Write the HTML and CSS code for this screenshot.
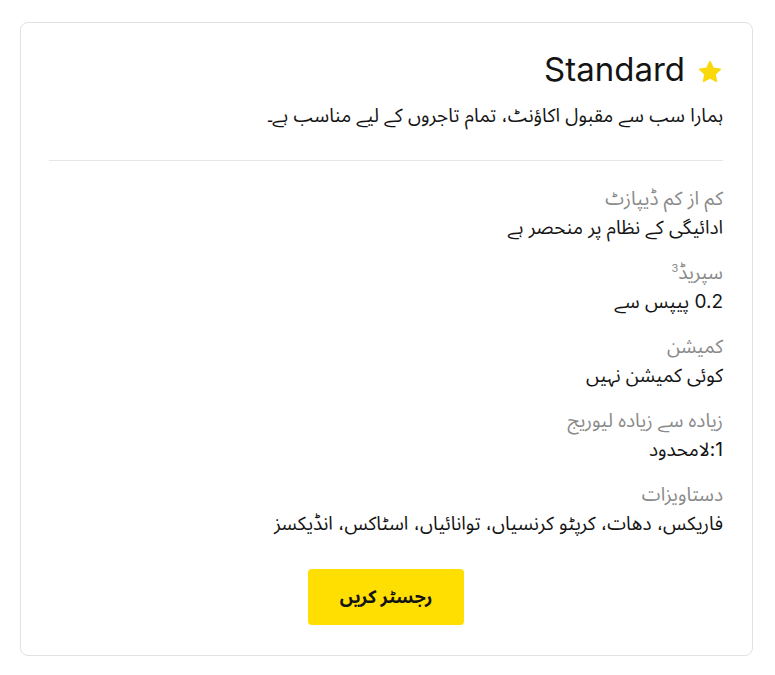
FILE: index.html
```html
<!DOCTYPE html>
<html lang="ur" dir="rtl">
<head>
  <meta charset="UTF-8" />
  <meta name="viewport" content="width=device-width, initial-scale=1" />
  <title>Standard</title>
  <link rel="stylesheet" href="styles.css">
</head>
<body>

<div class="plan-card">
  <div class="plan-head">
    <h2 class="plan-title">
      <svg class="star" width="26" height="26" viewBox="0 0 24 24"><path d="M12 2.5l2.9 6.1 6.6.8-4.9 4.6 1.3 6.6L12 17.3l-5.9 3.3 1.3-6.6-4.9-4.6 6.6-.8z" fill="#f9d90a" stroke="#f9d90a" stroke-width="1.5" stroke-linejoin="round"/></svg>
      <span dir="ltr">Standard</span>
    </h2>
    <p class="plan-desc">ہمارا سب سے مقبول اکاؤنٹ، تمام تاجروں کے لیے مناسب ہے۔</p>
  </div>

  <div class="plan-rows">
    <div class="row">
      <div class="row-label">کم از کم ڈیپازٹ</div>
      <div class="row-value">ادائیگی کے نظام پر منحصر ہے</div>
    </div>
    <div class="row">
      <div class="row-label">سپریڈ<sup>3</sup></div>
      <div class="row-value">0.2 پیپس سے</div>
    </div>
    <div class="row">
      <div class="row-label">کمیشن</div>
      <div class="row-value">کوئی کمیشن نہیں</div>
    </div>
    <div class="row">
      <div class="row-label">زیادہ سے زیادہ لیوریج</div>
      <div class="row-value">1:لامحدود</div>
    </div>
    <div class="row">
      <div class="row-label">دستاویزات</div>
      <div class="row-value">فاریکس، دھات، کرپٹو کرنسیاں، توانائیاں، اسٹاکس، انڈیکسز</div>
    </div>
  </div>

  <div class="plan-action">
    <button class="btn-register">رجسٹر کریں</button>
  </div>
</div>

</body>
</html>
```

FILE: styles.css
```css
body {
  font-family: 'Inter', 'Noto Sans Arabic', 'DejaVu Sans', sans-serif;
  background: #fff;
  margin: 0;
  padding: 22px 22px 0 20px;
  color: #141414;
}
.plan-card {
  width: 733px;
  height: 634px;
  box-sizing: border-box;
  border: 1px solid #e2e2e2;
  border-radius: 8px;
  padding: 24px 29px 0 28px;
}
.plan-head {
  border-bottom: 1px solid #e6e6e6;
  padding-bottom: 31px;
}
.plan-title {
  margin: 0;
  display: flex;
  align-items: center;
  gap: 12px;
  font-size: 33px;
  font-weight: 400;
  line-height: 44px;
  color: #141414;
}
.star {
  margin-top: 6px;
}
.plan-desc {
  margin: 12px 0 0;
  font-size: 19px;
  line-height: 26px;
}
.plan-rows {
  padding-top: 23px;
}
.row {
  margin-bottom: 16px;
}
.row-label {
  color: #8a8a8a;
  font-size: 19px;
  line-height: 29px;
}
.row-label sup {
  font-size: 11px;
  line-height: 0;
}
.row-value {
  font-size: 19px;
  line-height: 29px;
}
.plan-action {
  display: flex;
  justify-content: center;
  padding-top: 15px;
}
.btn-register {
  background: #ffde02;
  border: none;
  border-radius: 4px;
  width: 156px;
  height: 56px;
  font-family: inherit;
  font-size: 18px;
  font-weight: 700;
  color: #141414;
  cursor: pointer;
}
```
